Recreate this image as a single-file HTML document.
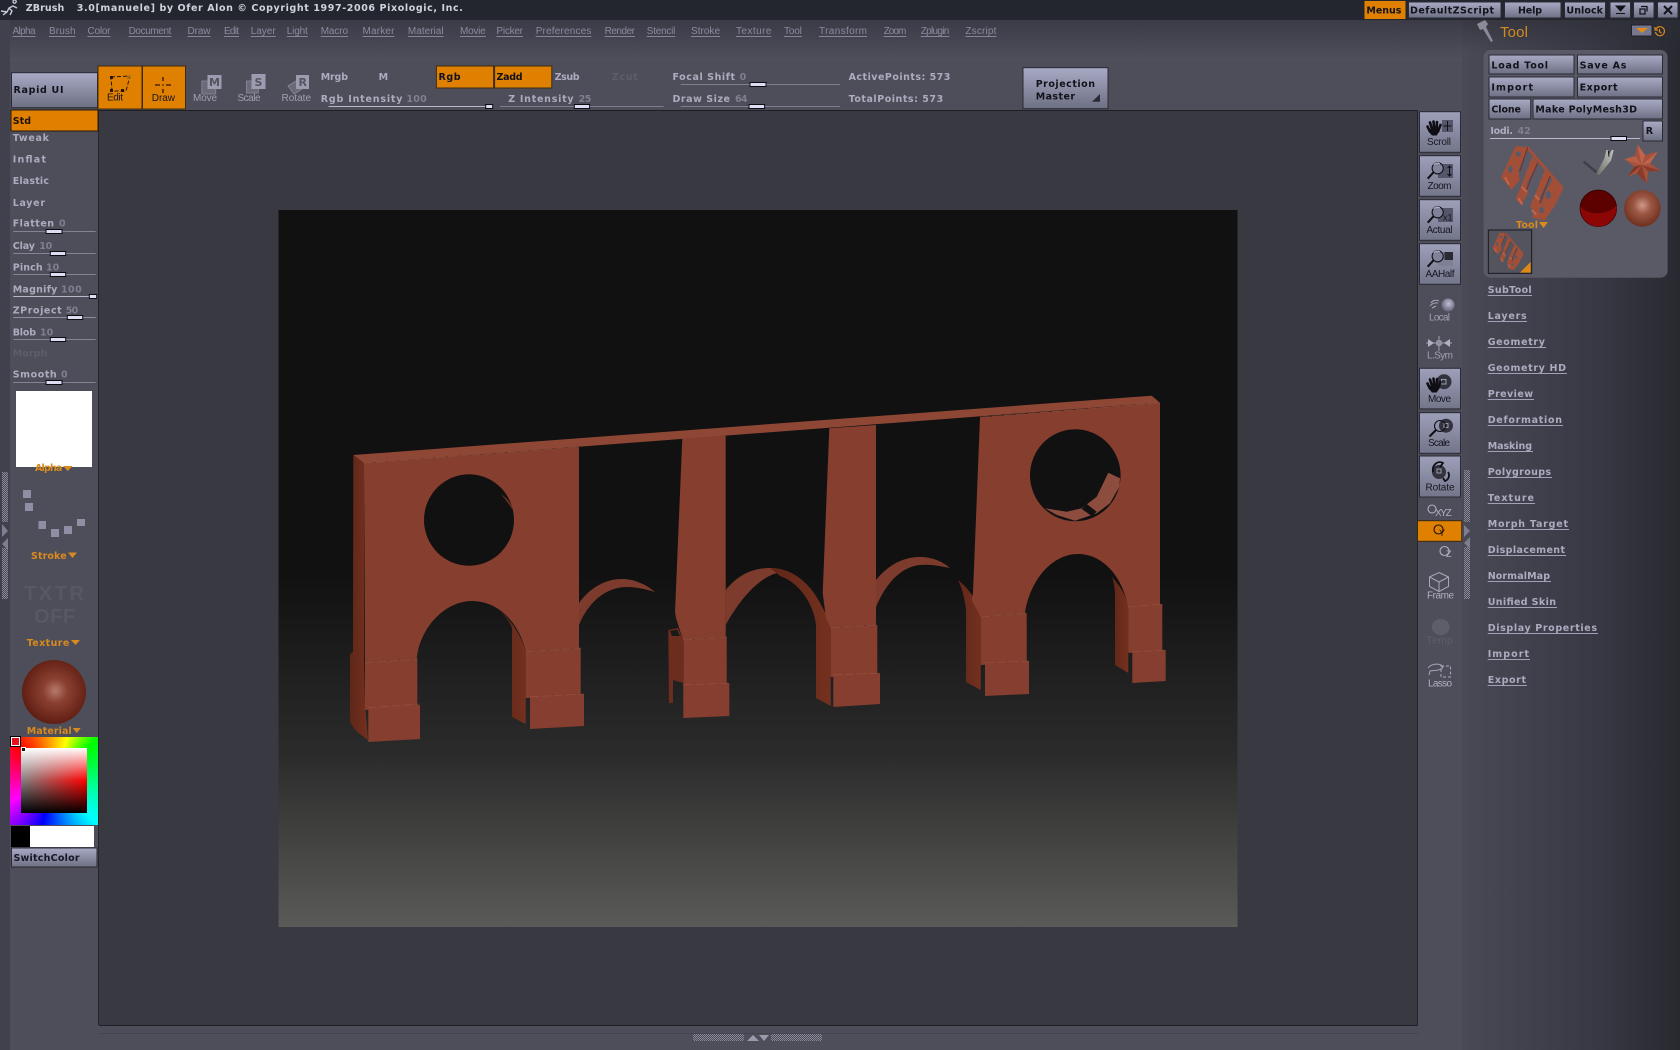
<!DOCTYPE html>
<html><head><meta charset="utf-8"><title>ZBrush</title>
<style>
html,body{margin:0;padding:0;background:#4e4e5a;overflow:hidden}
body{width:1680px;height:1050px;position:relative}
svg{position:absolute;left:0;top:0;display:block}
text{white-space:pre}
.t{font:bold 9.5px "DejaVu Sans",sans-serif;fill:#acacc0}
.d{font:bold 9.5px "DejaVu Sans",sans-serif;fill:#12121a}
.v{font:bold 9.5px "DejaVu Sans",sans-serif;fill:#7f7f91}
.o{font:bold 9.5px "DejaVu Sans",sans-serif;fill:#d98a1e}
.x{font:bold 9.5px "DejaVu Sans",sans-serif;fill:#5d5d69}
.m{font:10px "Liberation Sans",sans-serif;fill:#8a8a9e}
.l{font:10px "Liberation Sans",sans-serif;fill:#16161e}
.n{font:10px "Liberation Sans",sans-serif;fill:#a0a0b2}
.u{stroke:#84849a;stroke-width:1}
.w{stroke:#a0a0b6;stroke-width:1}
.b{stroke:#2a2a34;stroke-width:1}
.s{stroke:#b9b9c9;stroke-width:1}
.h{fill:#dcdcf2;stroke:#0c0c12;stroke-width:1}
#pick{position:absolute;left:10px;top:737px;width:88px;height:88px;background:conic-gradient(from 315deg,#f00 0deg,#ff0 62deg,#0f0 90deg,#0ff 180deg,#00f 240deg,#f0f 290deg,#f00 360deg)}
#sq{position:absolute;left:11px;top:11px;width:66px;height:65px;background:linear-gradient(to bottom,#fff 0,rgba(255,255,255,0) 50%,rgba(0,0,0,0) 50%,#000 100%),linear-gradient(to right,#808080,#f00)}
#red{position:absolute;left:1px;top:0;width:7px;height:7px;background:#e8101a;border:1px solid #fff;outline:1px solid #000}
#hd{position:absolute;left:11px;top:10px;width:3px;height:3px;background:#111;border:1px solid #fff}
</style></head><body>
<svg width="1680" height="1050" viewBox="0 0 1680 1050" xmlns="http://www.w3.org/2000/svg">
<defs>
<linearGradient id="top" x1="0" y1="0" x2="0" y2="1"><stop offset="0" stop-color="#3a3b46"/><stop offset="1" stop-color="#50505c"/></linearGradient>
<linearGradient id="right" x1="0" y1="0" x2="1" y2="0"><stop offset="0" stop-color="#4a4a56"/><stop offset=".12" stop-color="#464652"/><stop offset=".6" stop-color="#383944"/><stop offset="1" stop-color="#282930"/></linearGradient>
<linearGradient id="fade" x1="0" y1="0" x2="0" y2="1"><stop offset="0" stop-color="#2c2d36" stop-opacity=".6"/><stop offset="1" stop-color="#2c2d36" stop-opacity="0"/></linearGradient>
<linearGradient id="btn" x1="0" y1="0" x2="0" y2="1"><stop offset="0" stop-color="#a9abc6"/><stop offset="1" stop-color="#6d6f83"/></linearGradient>
<linearGradient id="tb" x1="0" y1="0" x2="0" y2="1"><stop offset="0" stop-color="#9ea0ba"/><stop offset="1" stop-color="#73758a"/></linearGradient>
<linearGradient id="doc" gradientUnits="userSpaceOnUse" x1="0" y1="210" x2="0" y2="927"><stop offset="0" stop-color="#111111"/><stop offset=".51" stop-color="#111111"/><stop offset=".76" stop-color="#2b2b2b"/><stop offset="1" stop-color="#5a5a58"/></linearGradient>
<linearGradient id="side" x1="0" y1="0" x2="1" y2="0"><stop offset="0" stop-color="#5f2718"/><stop offset="1" stop-color="#74301f"/></linearGradient>
<radialGradient id="mat" cx=".52" cy=".48" r=".55"><stop offset="0" stop-color="#b57a6d"/><stop offset=".35" stop-color="#8a4030"/><stop offset="1" stop-color="#5c1b10"/></radialGradient>
<radialGradient id="mat2" cx=".5" cy=".42" r=".6"><stop offset="0" stop-color="#cf9a8c"/><stop offset=".4" stop-color="#9a5642"/><stop offset="1" stop-color="#6c2d1c"/></radialGradient>
<radialGradient id="gs" cx=".55" cy=".4" r=".6"><stop offset="0" stop-color="#c0c0d4"/><stop offset="1" stop-color="#62627a"/></radialGradient>
<linearGradient id="brs" x1="0" y1="1" x2="1" y2="0"><stop offset="0" stop-color="#6c7068"/><stop offset="1" stop-color="#c4c4bc"/></linearGradient>
<pattern id="dit" width="2" height="2" patternUnits="userSpaceOnUse"><rect width="2" height="2" fill="#4a4a56"/><rect width="1" height="1" fill="#8a8a9a"/><rect x="1" y="1" width="1" height="1" fill="#8a8a9a"/></pattern>

<g id="hand"><path d="M1.5 7.5l2.500 5M4 3.500l2.500 8M7.500 2.500l1 9M11 3l-.5 9M14.500 6l-2.500 6.500" stroke="#0e0e14" stroke-width="2.600" fill="none" stroke-linecap="round"/><path d="M3 10h10l-.8 4-1.400 2.500H6L3.500 13.500z" fill="#0e0e14"/></g>
<g id="mag"><circle cx="0" cy="0" r="5.600" fill="#80829a" stroke="#101018" stroke-width="1.100"/><path d="M-4-3.600a5 5 0 0 1 6-1" stroke="#c8c8d8" fill="none"/><path d="M-4.200 4L-10 10.400" stroke="#0e0e14" stroke-width="2"/></g>

<g id="thumb">
<path d="M125,20L232,145" stroke="#a24f39" stroke-width="9" fill="none"/>
<polygon points="92,18 128,22 112,62 100,90 104,120 80,150 62,128 48,112 58,92 72,60" fill="#a34f38"/>
<polygon points="142,50 158,68 125,130 128,160 108,197 92,175 108,140 120,105" fill="#a34f38"/>
<polygon points="180,90 195,108 165,170 168,195 150,215 135,200 150,165 165,125" fill="#a34f38"/>
<polygon points="205,115 234,148 208,200 190,225 178,242 140,232 152,208 170,190 185,150" fill="#a34f38"/>
<circle cx="100" cy="42" r="8" fill="#5a5a67"/><ellipse cx="76" cy="88" rx="7" ry="11" fill="#5a5a67"/>
<ellipse cx="190" cy="165" rx="8" ry="12" fill="#5a5a67"/><ellipse cx="170" cy="210" rx="7" ry="10" fill="#5a5a67"/>
<path d="M60,112l12,22M100,175l12,18M140,210l14,14M110,140l16,16M150,165l12,14" stroke="#c46e55" stroke-width="6" opacity=".8" fill="none"/>
<path d="M128,22L104,95M158,68L124,150M195,108L164,190" stroke="#7a2f20" stroke-width="3" fill="none"/>
</g>

<g id="model">
<polygon points="353.3,455 1151.7,395.7 1160,402.7 364,463" fill="#8f4735"/>
<path d="M353.3,455L364,463V663L365,705L368,740L356,731L350,722V654L353,652Z" fill="url(#side)"/>
<path d="M500,611C514,623 522,638 525.7,652L525.7,724L512,717L512,628C510,622 505,616 500,611Z" fill="url(#side)"/>
<path d="M579,603C590,588 605,579 622,579C635,579 647,585 655,592C645,589 636,587 627,587C605,587 588,603 579,625Z" fill="#7c3b2c"/>
<path d="M668.3,630L678,628L683,640V683L673,680V703L669,703Z" fill="#6d2d1e"/>
<path d="M670,631L677,629.500L680,636L672,636Z" fill="#1a1a18"/>
<path d="M725.700,590C738,575 752,568 770,568C776,568 782,569 788,572C768,570 745,590 725.700,625Z" fill="#7c3b2c"/>
<path d="M770,568C790,568 808,580 820,603C825,612 830,620 830.700,628V706L816,698V625C814,605 800,583 780,576Z" fill="url(#side)"/>
<path d="M876,580C888,565 903,557 920,557C933,557 943,562 950,568C940,566 930,564 920,565C900,567 885,585 876,607Z" fill="#7c3b2c"/>
<path d="M958,580C970,590 977,600 980.7,617V690L966,682V610C965,600 962,588 958,580Z" fill="url(#side)"/>
<path d="M1112,577C1122,588 1127,598 1128.3,607V673L1115,665V595C1115,590 1114,583 1112,577Z" fill="url(#side)"/>

<path fill-rule="evenodd" fill="#863f2f" d="M364,463L579,447V648L525.7,651.7C520,625 500,601 472,601C448,601 425,622 418,650L416.7,658L365,663ZM424,520a45,45.7 0 1 0 90,0a45,45.7 0 1 0 -90,0Z"/>
<path d="M501,494C508,499 512,504 513.5,511C509,504 505,499 501,494Z" fill="#6b2e20"/>
<polygon points="365,663 417.3,658 417.3,706 365,710" fill="#863f2f"/>
<polygon points="368.3,709 420,705 420,739 368.3,742" fill="#853e2f"/>
<polygon points="525.7,651.7 580.7,648 580.7,696 525.7,698" fill="#863f2f"/>
<polygon points="530,697 584,694 584,726 530,729" fill="#853e2f"/>
<polygon points="682.3,438.500 725.700,435.500 725.700,637 683,640 676,618 675,612" fill="#863f2f"/>
<polygon points="683.3,640 726.7,637 726.7,684 683.3,686" fill="#863f2f"/>
<polygon points="683.3,685 729.3,683 729.3,716 683.3,718" fill="#853e2f"/>
<polygon points="829.3,428.3 876,425 876,625 830.7,628 826,618 822.7,593" fill="#863f2f"/>
<polygon points="830.7,628 877.3,625 877.3,674 830.7,677" fill="#863f2f"/>
<polygon points="833.3,676 880,673 880,704 833.3,707" fill="#853e2f"/>
<path fill-rule="evenodd" fill="#863f2f" d="M980,417.3L1160,402.7V605L1128.3,607C1122,575 1102,554 1078,554C1052,554 1030,580 1025,613L980.7,617L971.700,600L973,593ZM1030,475.3a45.3,46 0 1 0 90.6,0a45.3,46 0 1 0 -90.6,0Z"/>
<polygon points="980.7,617 1026.7,613 1026.7,662 980.7,665" fill="#863f2f"/>
<polygon points="985,664 1029,661 1029,694 985,696" fill="#853e2f"/>
<polygon points="1128.3,607 1162.3,604 1162.3,651 1128.3,653" fill="#863f2f"/>
<polygon points="1132.3,652 1165.7,650 1165.7,681 1132.3,683" fill="#853e2f"/>
<path d="M1108.3,472.7L1120,478.3L1119.3,486.7L1110,503.3L1096.7,513.3L1075,520.7L1056.7,515L1045,508.3L1066.7,511.7L1081.7,508.3L1096.7,496.7Z" fill="#8c4c3e"/>
<polygon points="1081.7,509 1086.7,504 1096.7,511.7 1091.7,516" fill="#111"/>
<g stroke="#aa6f5f" stroke-width=".7" stroke-dasharray="9 3" fill="none" opacity=".4">
<path d="M364,463L579,447M365,663L417,659M368,708L420,704M526,652L581,648M530,697L584,694M683,640L727,637M683,685L729,683M831,628L877,625M833,675L880,673M981,617L1027,613M985,663L1029,661M1128,607L1162,604M1132,652L1166,650M980,417L1160,403"/>
</g>
</g>
</defs>

<rect width="1680" height="1050" fill="#4e4e5a"/>
<rect y="20" width="1680" height="42" fill="url(#top)"/>
<rect width="1680" height="20" fill="#23262f"/>
<rect y="20" width="10" height="1030" fill="#40414c"/>
<rect x="98" y="110" width="1" height="915" fill="#25252e"/>
<rect x="99" y="110" width="1319" height="915" fill="#393942"/>
<rect x="99" y="110" width="1319" height="1" fill="#1e1e26"/>
<rect x="1417" y="110" width="1" height="915" fill="#22222a"/>
<rect x="99" y="1025" width="1319" height="1" fill="#1e1e26"/>
<rect x="99" y="1033" width="1319" height="1" fill="#44444f"/>
<rect x="1462" y="20" width="218" height="1030" fill="url(#right)"/>
<rect x="1462" y="20" width="218" height="32" fill="url(#fade)"/>

<rect x="278.500" y="210" width="959" height="717" fill="url(#doc)"/>
<use href="#model"/>

<path d="M3 15l4-3 2-4 4-2 4 2M13 1.500a1.600 1.600 0 1 1 0 .1M9 8l3 3-2 4M7 12l-6-1" stroke="#c8c8d4" stroke-width="1.400" fill="none"/>
<text class="t" x="25.700" y="11" textLength="38.600" style="fill:#d0d2dc">ZBrush</text>
<text class="t" x="76.800" y="11" textLength="386" style="fill:#d0d2dc">3.0[manuele] by Ofer Alon © Copyright 1997-2006 Pixologic, Inc.</text>

<rect x="1364.500" y="1" width="41" height="18" fill="#e08000"/><text class="d" x="1366.400" y="13.500" textLength="35">Menus</text>
<rect x="1408.500" y="2" width="92.500" height="16" fill="url(#btn)" class="b"/><text class="d" x="1410" y="13.500" textLength="84">DefaultZScript</text>
<rect x="1504.500" y="2" width="56.500" height="16" fill="url(#btn)" class="b"/><text class="d" x="1518" y="13.500" textLength="24">Help</text>
<rect x="1564.500" y="2" width="41" height="16" fill="url(#btn)" class="b"/><text class="d" x="1566.400" y="13.500" textLength="36.600">Unlock</text>
<rect x="1610" y="2" width="20.500" height="16" fill="url(#btn)" class="b"/><path d="M1616 6h9l-4.500 5zM1616 13.500h9" fill="#12121a" stroke="#12121a"/>
<rect x="1633.500" y="2" width="20.500" height="16" fill="url(#btn)" class="b"/><path d="M1641 6.500h6v5M1640 9h5v5h-5z" fill="none" stroke="#12121a" stroke-width="1.300"/>
<rect x="1657.500" y="2" width="20.500" height="16" fill="url(#btn)" class="b"/><path d="M1664 6l8 8M1672 6l-8 8" stroke="#12121a" stroke-width="2"/>

<g>
<text class="m" x="12.500" y="34" textLength="23">Alpha</text><path class="u" d="M12.500 36.500h23"/>
<text class="m" x="49" y="34" textLength="26.500">Brush</text><path class="u" d="M49 36.500h26.500"/>
<text class="m" x="87.500" y="34" textLength="23">Color</text><path class="u" d="M87.500 36.500h23"/>
<text class="m" x="128.600" y="34" textLength="42.800">Document</text><path class="u" d="M128.600 36.500h42.800"/>
<text class="m" x="187.500" y="34" textLength="23">Draw</text><path class="u" d="M187.500 36.500h23"/>
<text class="m" x="224" y="34" textLength="15">Edit</text><path class="u" d="M224 36.500h15"/>
<text class="m" x="250.700" y="34" textLength="25">Layer</text><path class="u" d="M250.700 36.500h25"/>
<text class="m" x="286.800" y="34" textLength="21">Light</text><path class="u" d="M286.800 36.500h21"/>
<text class="m" x="320.700" y="34" textLength="27.300">Macro</text><path class="u" d="M320.700 36.500h27.300"/>
<text class="m" x="362.500" y="34" textLength="32">Marker</text><path class="u" d="M362.500 36.500h32"/>
<text class="m" x="407.900" y="34" textLength="35.700">Material</text><path class="u" d="M407.900 36.500h35.700"/>
<text class="m" x="460" y="34" textLength="25.700">Movie</text><path class="u" d="M460 36.500h25.700"/>
<text class="m" x="496.400" y="34" textLength="26.600">Picker</text><path class="u" d="M496.400 36.500h26.600"/>
<text class="m" x="535.700" y="34" textLength="55.700">Preferences</text><path class="u" d="M535.700 36.500h55.700"/>
<text class="m" x="604.600" y="34" textLength="30.400">Render</text><path class="u" d="M604.600 36.500h30.400"/>
<text class="m" x="646.800" y="34" textLength="28.600">Stencil</text><path class="u" d="M646.800 36.500h28.600"/>
<text class="m" x="691" y="34" textLength="29">Stroke</text><path class="u" d="M691 36.500h29"/>
<text class="m" x="736" y="34" textLength="35.400">Texture</text><path class="u" d="M736 36.500h35.400"/>
<text class="m" x="784" y="34" textLength="17.800">Tool</text><path class="u" d="M784 36.500h17.800"/>
<text class="m" x="819" y="34" textLength="48">Transform</text><path class="u" d="M819 36.500h48"/>
<text class="m" x="883.600" y="34" textLength="22.800">Zoom</text><path class="u" d="M883.600 36.500h22.800"/>
<text class="m" x="920.700" y="34" textLength="28.600">Zplugin</text><path class="u" d="M920.700 36.500h28.600"/>
<text class="m" x="965.400" y="34" textLength="31">Zscript</text><path class="u" d="M965.400 36.500h31"/>
</g>

<rect x="11.500" y="72.700" width="86" height="35" fill="url(#btn)" class="b"/>
<text class="d" x="13.500" y="93" textLength="50">Rapid UI</text>
<rect x="98" y="66" width="44" height="43" fill="#e08000" stroke="#3a2b10"/>
<rect x="142.500" y="66" width="43" height="43" fill="#e08000" stroke="#3a2b10"/>
<path d="M111 77l19-1-4 15h-14z" fill="none" stroke="#2a1a06" stroke-width="1" stroke-dasharray="4 2"/>
<g fill="#2a1406"><rect x="110" y="76" width="3" height="3"/><rect x="110" y="89" width="3" height="3"/><rect x="121" y="89" width="3" height="3"/></g><rect x="127" y="75.500" width="3.500" height="3" fill="#9a6a20"/>
<path d="M163 77v4M163 89v4M155 85h5M166 85h5" stroke="#2a1406" stroke-width="1.300"/><rect x="162.300" y="84.300" width="1.400" height="1.400" fill="#2a1406"/>
<text class="l" x="107" y="100.500" textLength="16">Edit</text>
<text class="l" x="151.800" y="101" textLength="23.200">Draw</text>
<rect x="201.800" y="81" width="14" height="13" fill="#6a6a78" stroke="#8a8a9c" stroke-width=".8"/><rect x="207.500" y="75" width="14" height="14" fill="#9c9cb0"/><text class="d" x="209" y="86" style="font-size:11px;fill:#54545f">M</text>
<rect x="246.400" y="81" width="12" height="12" fill="#6a6a78" stroke="#8a8a9c" stroke-width=".8"/><rect x="251.500" y="74" width="14" height="15" fill="#9c9cb0"/><text class="d" x="254.500" y="86" style="font-size:11px;fill:#54545f">S</text>
<path d="M288 86l8-5 6 8-8 5z" fill="#6a6a78" stroke="#8a8a9c" stroke-width=".8"/><rect x="296" y="75" width="13" height="14" fill="#9c9cb0"/><text class="d" x="298.500" y="86" style="font-size:11px;fill:#54545f">R</text>
<text class="n" x="193" y="101" textLength="24">Move</text>
<text class="n" x="237.500" y="101" textLength="23">Scale</text>
<text class="n" x="281.500" y="101" textLength="29.500">Rotate</text>

<text class="t" x="320.700" y="80" textLength="27.300">Mrgb</text>
<text class="t" x="378.600" y="80" textLength="7.800">M</text>
<rect x="436.400" y="66" width="57.200" height="22" fill="#e08000" stroke="#3a2b10"/><text class="d" x="438.500" y="80" textLength="22">Rgb</text>
<rect x="494.600" y="66" width="57.200" height="22" fill="#e08000" stroke="#3a2b10"/><text class="d" x="496.500" y="80" textLength="26">Zadd</text>
<text class="t" x="554.600" y="80" textLength="25">Zsub</text>
<text class="x" x="611.800" y="80" textLength="26">Zcut</text>
<text class="t" x="672.500" y="80" textLength="62.500">Focal Shift</text><text class="v" x="739.600" y="80" textLength="5.500">0</text>
<path class="s" d="M680.700 84.500H840" opacity=".45"/><rect x="750" y="82.500" width="16" height="4" class="h"/>
<text class="t" x="320.700" y="102" textLength="81.800">Rgb Intensity</text><text class="v" x="406.400" y="102" textLength="20.400">100</text>
<path class="s" d="M328.600 106.500H493"/><rect x="485.700" y="104.500" width="7" height="4" class="h"/>
<text class="t" x="508.200" y="102" textLength="65.400">Z Intensity</text><text class="v" x="578.600" y="102" textLength="12.800">25</text>
<path class="s" d="M500 106.500H663.600" opacity=".45"/><rect x="574.300" y="104.500" width="15.300" height="4" class="h"/>
<text class="t" x="672.500" y="102" textLength="57.500">Draw Size</text><text class="v" x="735" y="102" textLength="12.500">64</text>
<path class="s" d="M680.700 106.500H840" opacity=".45"/><rect x="749" y="104.500" width="15.600" height="4" class="h"/>
<text class="t" x="848.600" y="80" textLength="101.800">ActivePoints: 573</text>
<text class="t" x="848.600" y="102" textLength="94.600">TotalPoints: 573</text>
<rect x="1023" y="67.700" width="85" height="41" fill="url(#btn)" class="b"/>
<text class="d" x="1035.700" y="87" textLength="59.300">Projection</text>
<text class="d" x="1035.700" y="99.500" textLength="39.300">Master</text>
<polygon points="1092,101.700 1100,94 1100,101.700" fill="#2a2a34"/>

<rect x="11" y="110" width="87" height="21" fill="#e08000" stroke="#2a1a06"/>
<text class="d" x="12.700" y="124" textLength="18.300" style="fill:#20100a">Std</text>
<text class="t" x="12.700" y="141" textLength="36.300">Tweak</text>
<text class="t" x="12.700" y="162.500" textLength="33.300">Inflat</text>
<text class="t" x="12.700" y="184" textLength="36.300">Elastic</text>
<text class="t" x="12.700" y="206" textLength="32.300">Layer</text>
<text class="t" x="12.700" y="226.500" textLength="41.300">Flatten</text><text class="v" x="59" y="226.500" textLength="5">0</text>
<path class="s" d="M13.300 231.500H95.700" opacity=".5"/><rect x="46" y="229.500" width="16" height="4" class="h"/>
<text class="t" x="12.700" y="249" textLength="22.300">Clay</text><text class="v" x="39.300" y="249" textLength="13">10</text>
<path class="s" d="M13.300 253.500H95.700" opacity=".5"/><rect x="50.300" y="251.500" width="15.400" height="4" class="h"/>
<text class="t" x="12.700" y="270.500" textLength="30">Pinch</text><text class="v" x="46" y="270.500" textLength="13.300">10</text>
<path class="s" d="M13.300 274.500H95.700" opacity=".5"/><rect x="50.300" y="272.500" width="15.400" height="4" class="h"/>
<text class="t" x="12.700" y="292.500" textLength="44.600">Magnify</text><text class="v" x="61" y="292.500" textLength="20.700">100</text>
<path class="s" d="M13.300 296.500H95.700"/><rect x="89.300" y="294.500" width="7.400" height="4" class="h"/>
<text class="t" x="12.700" y="313.500" textLength="49">ZProject</text><text class="v" x="65.700" y="313.500" textLength="12.600">50</text>
<path class="s" d="M13.300 317.500H95.700" opacity=".6"/><rect x="67.300" y="315.500" width="15.400" height="4" class="h"/>
<text class="t" x="12.700" y="335.500" textLength="23.300">Blob</text><text class="v" x="40" y="335.500" textLength="13.300">10</text>
<path class="s" d="M13.300 339.500H95.700" opacity=".5"/><rect x="50.300" y="337.500" width="15.400" height="4" class="h"/>
<text class="x" x="12.700" y="356.500" textLength="34.600">Morph</text>
<text class="t" x="12.700" y="377.500" textLength="44">Smooth</text><text class="v" x="61" y="377.500" textLength="5">0</text>
<path class="s" d="M13.300 382.500H95.700" opacity=".5"/><rect x="46" y="380.500" width="16" height="4" class="h"/>
<rect x="16" y="391" width="76" height="76" fill="#ffffff"/>
<text class="o" x="35" y="471" textLength="27.300">Alpha</text><polygon points="63,466 72.700,466 67.800,471" fill="#d98a1e"/>
<g fill="#8e8ea4"><rect x="23" y="490" width="8" height="8"/><rect x="25" y="503" width="8" height="8"/><rect x="38.500" y="521" width="7.500" height="8"/><rect x="51" y="529" width="8" height="8"/><rect x="64" y="526" width="8" height="8"/><rect x="77" y="519" width="8" height="7"/></g>
<text class="o" x="31" y="559" textLength="35.700">Stroke</text><polygon points="68,552.500 77,552.500 72.500,558" fill="#d98a1e"/>
<text x="24" y="600" textLength="60" style="font:bold 20px 'Liberation Sans',sans-serif;fill:#585864">TXTR</text>
<text x="34" y="623" textLength="41" style="font:bold 20px 'Liberation Sans',sans-serif;fill:#585864">OFF</text>
<text class="o" x="26.700" y="646" textLength="42.600">Texture</text><polygon points="71,640 80,640 75.500,645" fill="#d98a1e"/>
<circle cx="54" cy="692" r="32" fill="url(#mat)"/>
<text class="o" x="26.700" y="734" textLength="45">Material</text><polygon points="72.700,728 80.700,728 76.700,733" fill="#d98a1e"/>
<rect x="11" y="826" width="19" height="21" fill="#000"/><rect x="30" y="826" width="64" height="21" fill="#fff"/>
<rect x="11.500" y="848" width="85.500" height="19" fill="url(#btn)" class="b"/>
<text class="d" x="13.500" y="861" textLength="66" style="fill:#171726">SwitchColor</text>

<rect x="2" y="472" width="6" height="50" fill="url(#dit)"/><rect x="2" y="548" width="6" height="51" fill="url(#dit)"/>
<polygon points="2,524 8,531 2,537" fill="#7e7e90"/><polygon points="8,538 2,544 8,550" fill="#7e7e90"/>

<rect x="1419.500" y="111.700" width="41" height="40.600" fill="url(#tb)" class="b"/>
<rect x="1419.500" y="155.700" width="41" height="40.600" fill="url(#tb)" class="b"/>
<rect x="1419.500" y="199.700" width="41" height="40.600" fill="url(#tb)" class="b"/>
<rect x="1419.500" y="243.700" width="41" height="40.600" fill="url(#tb)" class="b"/>
<rect x="1419.500" y="368.300" width="41" height="40.600" fill="url(#tb)" class="b"/>
<rect x="1419.500" y="412.700" width="41" height="40.600" fill="url(#tb)" class="b"/>
<rect x="1419.500" y="456" width="41" height="41" fill="url(#tb)" class="b"/>

<use href="#hand" x="1426" y="119"/>
<rect x="1442" y="120" width="11" height="12" fill="#55566a"/><path d="M1447.500 121v10M1443.500 126h8" stroke="#101018"/>
<text class="l" x="1427" y="145" textLength="24">Scroll</text>

<rect x="1438" y="164" width="15" height="14" fill="#55566a"/><path d="M1449.500 166v10M1447.500 168l2-2 2 2M1447.500 174l2 2 2-2" stroke="#101018" fill="none"/>
<use href="#mag" x="1437.700" y="168.300"/>
<text class="l" x="1427.500" y="189" textLength="24">Zoom</text>

<rect x="1438" y="208" width="15" height="14" fill="#55566a"/><text class="l" x="1443" y="220.500" style="font-size:9px">x1</text>
<use href="#mag" x="1437.700" y="212.300"/>
<text class="l" x="1426.500" y="233" textLength="26">Actual</text>

<rect x="1438" y="252" width="15" height="14" fill="#7e8094"/><rect x="1444.500" y="252" width="8.500" height="8" fill="#2a2a34"/>
<use href="#mag" x="1437.700" y="256.300"/>
<text class="l" x="1425.500" y="277" textLength="29">AAHalf</text>

<circle cx="1448" cy="305" r="6.500" fill="url(#gs)"/>
<path d="M1431 303a6 6 0 0 1 8-2M1430 306a8 6 0 0 1 8-3M1432 308l4-2" stroke="#a8a8ba" fill="none"/>
<text class="n" x="1429" y="320.500" textLength="21">Local</text>
<path d="M1426 343h26M1439 336v15" stroke="#a0a0b2"/><polygon points="1428,339 1428,347 1434,343" fill="#b0b0c2"/><polygon points="1450,339 1450,347 1444,343" fill="#b0b0c2"/><rect x="1437" y="341" width="4" height="4" fill="none" stroke="#b0b0c2"/>
<text class="n" x="1427" y="358.500" textLength="26">L.Sym</text>

<circle cx="1444" cy="381.700" r="7.500" fill="#33333e"/><rect x="1441.500" y="379.500" width="4.500" height="4.500" fill="none" stroke="#9a9cb6"/>
<use href="#hand" x="1426" y="376"/>
<text class="l" x="1428" y="402" textLength="23">Move</text>

<circle cx="1446" cy="425.700" r="7" fill="#33333e"/><rect x="1444" y="423.500" width="4" height="4" fill="none" stroke="#9a9cb6"/>
<circle cx="1440" cy="426" r="5.500" fill="none" stroke="#101018" stroke-width="1.100"/><path d="M1436 430l-6.500 6.500" stroke="#0e0e14" stroke-width="2"/>
<text class="l" x="1428" y="446" textLength="22">Scale</text>

<circle cx="1439" cy="472" r="7" fill="#33333e"/><rect x="1437" y="469" width="4" height="4" fill="none" stroke="#9a9cb6"/>
<path d="M1433 472a7 8 0 0 1 10-9l-3 4M1448 472a6 6 0 0 1-3 9l-2-3" fill="none" stroke="#0e0e14" stroke-width="1.800"/>
<text class="l" x="1425.500" y="490.500" textLength="29">Rotate</text>

<circle cx="1432" cy="509" r="4" fill="none" stroke="#b0b0c2" stroke-width="1.100"/>
<text class="n" x="1435" y="516" textLength="16.700" style="fill:#b0b0c2">XYZ</text>
<rect x="1417.500" y="520.700" width="44.200" height="20.600" fill="#e08000" stroke="#3a2b10"/>
<circle cx="1438.500" cy="529.500" r="4.500" fill="none" stroke="#20100a" stroke-width="1.100"/><text class="l" x="1439" y="536" style="font-size:9px;fill:#20100a">Y</text>
<circle cx="1444.500" cy="551" r="4.500" fill="none" stroke="#b0b0c2" stroke-width="1.100"/><text class="n" x="1446" y="557" style="font-size:9px;fill:#b0b0c2">Z</text>
<path d="M1439 572.500l9.500 4.500v9.500l-9.500 5-9.500-5v-9.500zM1429.500 577l9.500 5 9.500-5M1439 582v10" fill="none" stroke="#a8a8ba"/>
<text class="n" x="1427" y="598.500" textLength="27" style="fill:#b0b0c2">Frame</text>
<ellipse cx="1440.700" cy="627" rx="9" ry="8" fill="#5e5e6a"/>
<text x="1426.500" y="643.500" textLength="26" style="font:10px 'Liberation Sans',sans-serif;fill:#5e5e6a">Temp</text>
<path d="M1428 668c4-5 13-5 15-1-2 4-8 3-13 4l-1 4" fill="none" stroke="#a8a8ba"/><rect x="1441" y="666" width="9.500" height="11" fill="none" stroke="#a8a8ba" stroke-dasharray="3 2"/>
<text class="n" x="1428" y="686.500" textLength="24" style="fill:#b0b0c2">Lasso</text>

<rect x="1464" y="470" width="6" height="52" fill="url(#dit)"/><rect x="1464" y="547" width="6" height="52" fill="url(#dit)"/>
<polygon points="1464,525 1470,531 1464,537" fill="#7e7e90"/><polygon points="1470,537 1464,543 1470,549" fill="#7e7e90"/>

<path d="M1477 24l8-4 3 4-2 3 7 14-2 1-8-13-3 1z" fill="#8a8a98"/>
<text x="1500" y="37" textLength="28" style="font:15px 'Liberation Sans',sans-serif;fill:#d58a20">Tool</text>
<rect x="1631.500" y="25" width="20.500" height="11" fill="#777890" stroke="#20202a"/><polygon points="1636,28 1648,28 1642,33" fill="#e08a1a"/>
<path d="M1656 29a4.500 4.500 0 1 1-.5 3M1655 27v3h3M1659.500 29v2.800l2 1" fill="none" stroke="#d98a1e" stroke-width="1.200"/>
<rect x="1483.600" y="50" width="184" height="227.700" rx="7" fill="#5a5a67"/>
<rect x="1489" y="55" width="85" height="19" fill="url(#btn)" class="b"/><text class="d" x="1491.400" y="68.500" textLength="56.600">Load Tool</text>
<rect x="1577.500" y="55" width="85" height="19" fill="url(#btn)" class="b"/><text class="d" x="1579.600" y="68.500" textLength="46.800">Save As</text>
<rect x="1489" y="77" width="85" height="20" fill="url(#btn)" class="b"/><text class="d" x="1491.400" y="90.500" textLength="41.600">Import</text>
<rect x="1577.500" y="77" width="85" height="20" fill="url(#btn)" class="b"/><text class="d" x="1579.600" y="90.500" textLength="38">Export</text>
<rect x="1489" y="99" width="41.700" height="20" fill="url(#btn)" class="b"/><text class="d" x="1491.400" y="112.500" textLength="29.600">Clone</text>
<rect x="1533" y="99" width="129.500" height="20" fill="url(#btn)" class="b"/><text class="d" x="1535.400" y="112.500" textLength="101.600">Make PolyMesh3D</text>
<rect x="1643" y="121" width="19.500" height="20" fill="url(#btn)" class="b"/><text class="d" x="1645.700" y="134" textLength="7.300">R</text>
<text class="t" x="1490.400" y="134" textLength="22.600">Iodi.</text><text class="v" x="1517.500" y="134" textLength="13.200">42</text>
<path class="s" d="M1490 138.500H1640"/><rect x="1611" y="136.500" width="15.500" height="4" class="h"/>

<!-- thumbnails, in crop coordinates -->
<g transform="translate(1485 140) scale(.33333)">
<use href="#thumb"/>
<path d="M296,65L335,97" stroke="#3a4048" stroke-width="7" fill="none"/>
<path d="M334,102L358,55L364,30L371,30L371,48L380,30L386,30L378,62L344,104Z" fill="url(#brs)"/>
<path d="M370,32l2 18" stroke="#111" stroke-width="3"/>
<polygon points="458,14 480,45 518,35 495,70 527,92 490,95 485,130 455,100 428,110 448,80 418,58 450,48" fill="#a5513b"/>
<polygon points="458,14 480,45 470,75" fill="#c0654d"/><polygon points="518,35 495,70 470,75" fill="#c0654d"/><polygon points="527,92 490,95 470,75" fill="#8a3c2b"/><polygon points="485,130 455,100 470,75" fill="#8a3c2b"/><polygon points="418,58 450,48 470,75" fill="#b85e47"/><polygon points="428,110 448,80 470,75" fill="#7f3526"/>
<circle cx="340" cy="205" r="55" fill="#5c0000" stroke="#2a0000" stroke-width="2"/>
<path d="M286,200C310,228 368,226 395,196C398,232 370,260 340,260C310,260 284,232 286,200Z" fill="#8c0606"/>
<circle cx="472" cy="205" r="55" fill="url(#mat2)"/>
<rect x="10" y="270" width="130" height="130" fill="#54545f" stroke="#18181f" stroke-width="3"/>
<g transform="translate(48 278) scale(.5) translate(-100 -18)"><use href="#thumb"/></g>
<polygon points="105,398 137,366 137,398" fill="#e08a12"/>
</g>
<text class="o" x="1516" y="228" textLength="22">Tool</text><polygon points="1539,222 1548,222 1543.500,228" fill="#d98a1e"/>

<g>
<text class="t" x="1487.700" y="293" textLength="44">SubTool</text><path class="w" d="M1487.700 295.500H1532"/>
<text class="t" x="1487.700" y="319" textLength="39">Layers</text><path class="w" d="M1487.700 321.500H1527"/>
<text class="t" x="1487.700" y="345" textLength="57.300">Geometry</text><path class="w" d="M1487.700 347.500H1546"/>
<text class="t" x="1487.700" y="371" textLength="78.300">Geometry HD</text><path class="w" d="M1487.700 373.500H1567"/>
<text class="t" x="1487.700" y="397" textLength="45.300">Preview</text><path class="w" d="M1487.700 399.500H1534"/>
<text class="t" x="1487.700" y="423" textLength="74.300">Deformation</text><path class="w" d="M1487.700 425.500H1563"/>
<text class="t" x="1487.700" y="449" textLength="44.300">Masking</text><path class="w" d="M1487.700 451.500H1533"/>
<text class="t" x="1487.700" y="475" textLength="63.300">Polygroups</text><path class="w" d="M1487.700 477.500H1552"/>
<text class="t" x="1487.700" y="501" textLength="46.300">Texture</text><path class="w" d="M1487.700 503.500H1535"/>
<text class="t" x="1487.700" y="527" textLength="80.300">Morph Target</text><path class="w" d="M1487.700 529.500H1569"/>
<text class="t" x="1487.700" y="553" textLength="77.300">Displacement</text><path class="w" d="M1487.700 555.500H1566"/>
<text class="t" x="1487.700" y="579" textLength="62.300">NormalMap</text><path class="w" d="M1487.700 581.500H1551"/>
<text class="t" x="1487.700" y="605" textLength="68.300">Unified Skin</text><path class="w" d="M1487.700 607.500H1557"/>
<text class="t" x="1487.700" y="631" textLength="109.300">Display Properties</text><path class="w" d="M1487.700 633.500H1598"/>
<text class="t" x="1487.700" y="657" textLength="41.300">Import</text><path class="w" d="M1487.700 659.500H1530"/>
<text class="t" x="1487.700" y="683" textLength="38.300">Export</text><path class="w" d="M1487.700 685.500H1527"/>
</g>

<rect x="693" y="1034" width="51" height="7" fill="url(#dit)"/><rect x="771" y="1034" width="51" height="7" fill="url(#dit)"/>
<polygon points="747,1041 753,1035 759,1041" fill="#9a9aac"/><polygon points="759,1035 769,1035 764,1041" fill="#9a9aac"/>
</svg>
<div id="pick"><div id="sq"></div><div id="red"></div><div id="hd"></div></div>
</body></html>
